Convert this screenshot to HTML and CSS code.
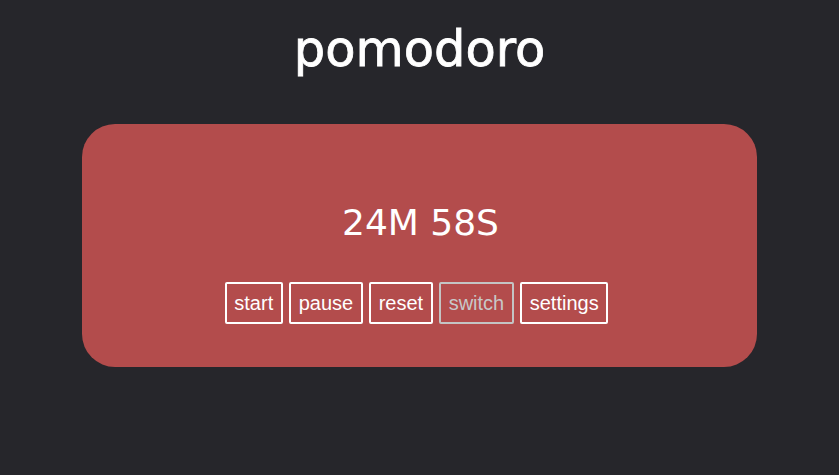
FILE: index.html
```html
<!DOCTYPE html>
<html lang="en">
<head>
<meta charset="utf-8">
<title>pomodoro</title>
<link rel="stylesheet" href="styles.css">
</head>
<body>
<main class="page">
  <h1 class="title">pomodoro</h1>
  <section class="card">
    <div class="timer">24M 58S</div>
    <div class="controls">
      <button class="btn">start</button>
      <button class="btn">pause</button>
      <button class="btn">reset</button>
      <button class="btn btn-disabled" disabled>switch</button>
      <button class="btn">settings</button>
    </div>
  </section>
</main>
</body>
</html>
```
FILE: styles.css
```css
html, body {
  margin: 0;
  padding: 0;
  background: #26262b;
}
.page {
  display: flex;
  flex-direction: column;
  align-items: center;
  padding-top: 20px;
  font-family: "DejaVu Sans", sans-serif;
  color: #ffffff;
}
.title {
  margin: 0;
  font-size: 49.5px;
  line-height: 58px;
  font-weight: normal;
  color: #ffffff;
  -webkit-text-stroke: 0.8px #ffffff;
}
.card {
  margin-top: 46px;
  width: 675px;
  box-sizing: border-box;
  padding: 78px 0 43px;
  background: #b34c4c;
  border-radius: 33px;
  display: flex;
  flex-direction: column;
  align-items: center;
}
.timer {
  font-size: 36px;
  line-height: 42px;
  color: #ffffff;
  padding-left: 2px;
}
.controls {
  margin-top: 38px;
  display: flex;
  gap: 6.5px;
  padding-right: 6px;
}
.btn {
  font-family: "Liberation Sans", Arial, sans-serif;
  font-size: 20px;
  line-height: 22px;
  padding: 8px 7.5px;
  margin: 0;
  border: 2px solid #ffffff;
  border-radius: 2px;
  background: transparent;
  color: #ffffff;
}
.btn-disabled {
  border-color: #c4c4c4;
  color: #c8c8c8;
}
```
